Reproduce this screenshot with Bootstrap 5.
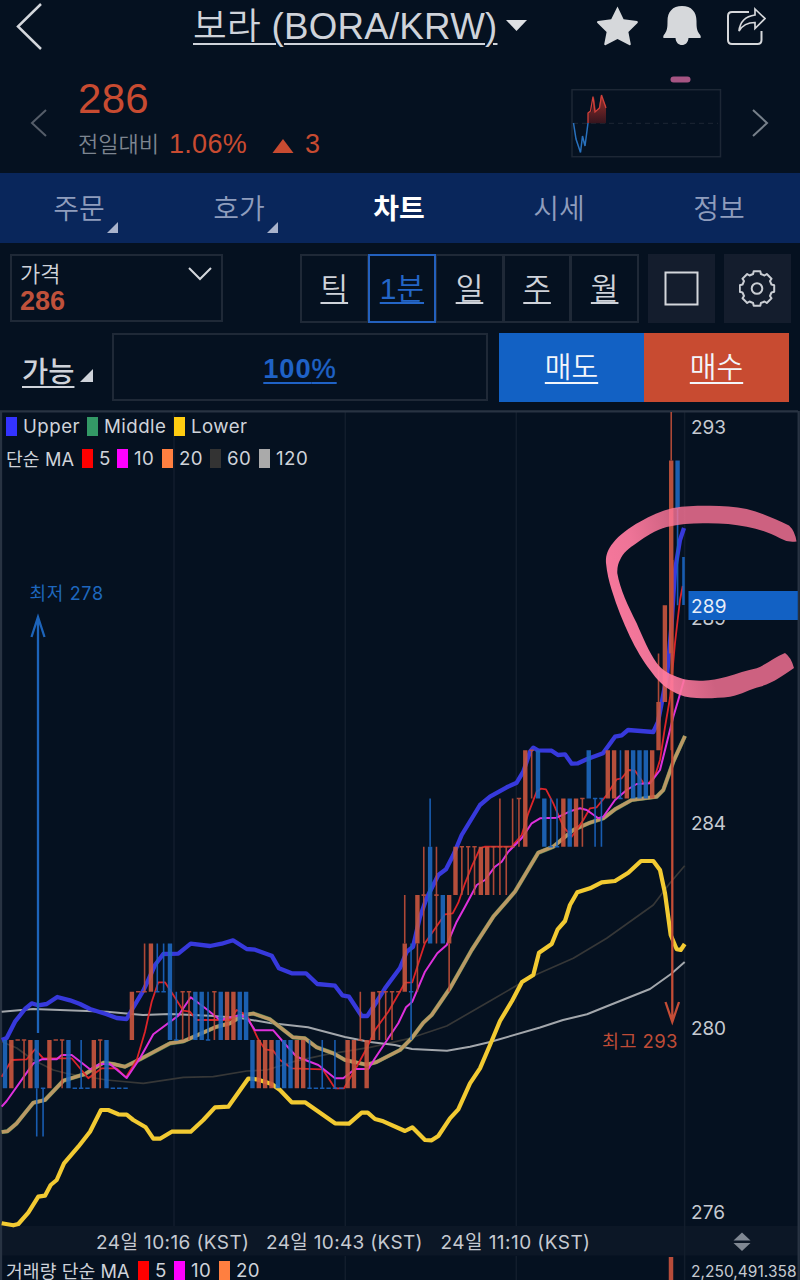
<!DOCTYPE html>
<html lang="ko">
<head>
<meta charset="utf-8">
<meta name="viewport" content="width=device-width, initial-scale=1">
<title>보라 (BORA/KRW)</title>
<link href="https://cdn.jsdelivr.net/npm/bootstrap@5.3.0/dist/css/bootstrap.min.css" rel="stylesheet">
<style>
:root{--ink:#051120;--line:#1f2937;--up:#c84b31;--down:#1261c4;--txt:#cfd3da}
body{width:800px;height:1280px;overflow:hidden;background:var(--ink);color:var(--txt);font-family:"Liberation Sans","Noto Sans CJK KR",sans-serif;line-height:1}
a{color:inherit}
.topbar{height:52px;padding:0 34px 0 16px}
.pair{font-size:36.7px;line-height:48px;letter-spacing:.25px;text-underline-offset:4px;text-decoration-thickness:2px;margin-left:150px;white-space:nowrap;padding-top:2px;font-weight:350}
.quote{height:121px;padding:24px 31px 0 30px}
.last{font-size:42px;line-height:46px;color:var(--up);margin-left:31px;letter-spacing:.3px}
.delta{color:var(--up);font-size:27px;line-height:34px;height:34px;margin:5px 0 0 31px}
.delta .rate{width:103px;letter-spacing:.3px}
.delta .cap{font-size:22px;color:#7d8590;font-weight:350;width:91px;padding-top:2px}
.tabs{height:70px;background:#09265b}
.tabs a{flex:1 1 0;color:#8f9dbd;font-size:28px;font-weight:350;text-decoration:none;line-height:74px;text-align:center;position:relative}
.tabs a.active{color:#fff;font-weight:700}
.tabs span{display:inline-block;position:relative;left:-1px;height:70px}
.more::after{content:"";position:absolute;right:-13px;bottom:10px;border-style:solid;border-width:0 0 11px 11px;border-color:transparent transparent #a9b3cc transparent}
.tools{height:90px;padding:11px 9px 0 10px}
.pricebox{width:213px;height:68px;border:2px solid var(--line);padding:6px 8px}
.pricebox .lbl{font-size:22px;line-height:26px;font-weight:350}
.pricebox .val{font-size:27px;line-height:26px;font-weight:700;color:#bf513b}
.seg{margin-left:78px;height:69px;width:338px}
.seg a{flex:1 1 0;border:2px solid var(--line);margin-left:-1px;text-align:center;font-size:30px;font-weight:350;line-height:66px;text-underline-offset:3px;text-decoration-thickness:2px}
.seg a.active{border-color:#2360bd;color:#2466c8;z-index:1;position:relative}
.tool{width:67px;height:69px;background:#141d2d}
.orders{height:77px;padding:0 11px 0 22px}
.avail{width:90px;font-size:28.5px;font-weight:500;line-height:79px;white-space:nowrap}
.avail a,.orders a{text-underline-offset:4px;text-decoration-thickness:2px}
.percent{width:376px;height:68px;border:2px solid var(--line);text-align:center;font-weight:700;font-size:27.3px;letter-spacing:.9px;line-height:68px;color:#1f62c6}
.percent b{font-weight:400;-webkit-text-stroke:.4px}
.trade{width:145px;height:68.500px;line-height:71px;text-align:center;font-size:29px;color:#f3f6fb;font-weight:350}
.sell{background:var(--down);margin-left:11px}.buy{background:var(--up)}
.plot{height:870px;position:relative;font-family:Inter,"Noto Sans CJK KR",sans-serif;font-size:18.7px;letter-spacing:.45px;padding-top:1px}
.plot svg{position:absolute;left:0;top:0}
.legend{display:grid;position:relative;padding-left:6px;align-items:center;height:32px;line-height:32px;white-space:nowrap}
.bands{grid-template-columns:81px 87px auto}
.averages{grid-template-columns:76px 35px 45px 48px 49px auto}
.vol{grid-template-columns:132px 36px 45px auto;height:30px;line-height:30px}
.legend i{display:inline-block;width:11px;height:19px;margin-right:6px;vertical-align:-3px}
.ko{font-family:Inter,"Noto Sans CJK KR",sans-serif;font-size:18.2px;letter-spacing:.1px}
.chartpad{height:781px}
</style>
<script src="https://cdn.jsdelivr.net/npm/bootstrap@5.3.0/dist/js/bootstrap.bundle.min.js"></script>
</head>
<body>
<header class="topbar d-flex align-items-center">
  <svg width="27" height="48" fill="none" stroke="#d4d7dc" stroke-width="2.500"><path d="M25 2 2 24.500 25 47"/></svg>
  <a href="#" class="pair">보라 (BORA/KRW)</a>
  <svg width="22" height="12" style="margin-left:9px"><path d="M0 0h21L10.500 11z" fill="#dfe1e4"/></svg>
  <div class="d-flex align-items-center ms-auto">
    <svg width="42" height="42" viewBox="596 4 42 42"><path d="m617.500 5.500 6.100 12.700 13.500 1.900q1.400 1 .2 2.200l-8.900 8.700 2.400 12.200q-.3 1.400-1.700.8l-11.600-6-11.600 6q-1.300.6-1.700-.8l2.400-12.200-9.400-9.200q-.8-1.300.8-1.800l13.200-1.800z" fill="#d6d8db"/></svg>
    <svg width="40" height="42" viewBox="663 5 40 42" class="mx-4"><path d="M683 6c-9.500 0-14.500 6-14.500 15 0 7.500-.5 9-2.500 12.500q-2.500 2.500-1.500 4.500h37q1-2-1.500-4.500c-2-3.500-2.500-5-2.500-12.500 0-9-5-15-14.500-15zM676.500 37.500c0 10 13 10 13 0z" fill="#d6d8db"/></svg>
    <svg width="40" height="42" viewBox="726 5 40 42" fill="none" stroke="#d6d8db" stroke-width="2"><path d="M749 12h-17q-4 0-4 4v24q0 4 4 4h25.500q4 0 4-4v-9"/><path d="M755 9l10 9.500-10 10v-6q-11 0-16 8.500 1.500-14 16-16z" stroke-width="1.700"/></svg>
  </div>
</header>

<section class="quote d-flex">
  <svg width="17" height="28" style="margin-top:33px" fill="none" stroke="#555d69" stroke-width="2"><path d="M16 1 2 14l14 13"/></svg>
  <div>
    <div class="last">286</div>
    <div class="delta d-flex align-items-center"><span class="cap">전일대비</span><span class="rate">1.06%</span><svg width="22" height="14" style="margin:4px 11px 0 0"><path d="M11 0 21.500 14h-21z" fill="#c84b31"/></svg><span>3</span></div>
  </div>
  <svg class="ms-auto" width="160" height="90" viewBox="566 74 160 90" style="margin-top:-2px">
    <defs><linearGradient id="g" x2="0" y2="1"><stop stop-color="#9b302c"/><stop offset="1" stop-color="#35151e"/></linearGradient></defs>
    <rect x="670.500" y="76.500" width="20" height="6" rx="3" fill="#a65583"/>
    <rect x="572" y="89.700" width="148.500" height="67" fill="none" stroke="#1d2735" stroke-width="1.500"/>
    <path d="M573 123.300H718" stroke="#1d2735" stroke-dasharray="5 4"/>
    <path d="M588 123.300v-11l4-1 2-14 2 14 3-4 2-12 5 11v17z" fill="url(#g)"/>
    <path d="M573.500 123 576 139l4.500 13.500 2-16.500 2.500 10 3-23" fill="none" stroke="#2871bd" stroke-width="1.500"/>
    <path d="M588 123v-10l2.500-2 2.500-14.500 2 15.500 4.500-4 2-13 4.500 13" fill="none" stroke="#d0403a" stroke-width="1.300"/>
  </svg>
  <svg width="17" height="28" style="margin:33px 0 0 26px" fill="none" stroke="#77808a" stroke-width="2"><path d="M1 1l14 13L1 27"/></svg>
</section>

<nav class="tabs d-flex">
  <a href="#"><span class="more">주문</span></a><a href="#"><span class="more">호가</span></a><a href="#" class="active"><span>차트</span></a><a href="#"><span>시세</span></a><a href="#"><span>정보</span></a>
</nav>

<section class="tools d-flex">
  <div class="pricebox d-flex justify-content-between">
    <div><div class="lbl">가격</div><div class="val">286</div></div>
    <svg width="26" height="16" style="margin:4px 0 0 0" fill="none" stroke="#d4d7dc" stroke-width="2"><path d="M2 2l11 11L24 2"/></svg>
  </div>
  <div class="seg d-flex"><a href="#">틱</a><a href="#" class="active">1분</a><a href="#">일</a><a href="#">주</a><a href="#">월</a></div>
  <div class="tool d-flex align-items-center justify-content-center ms-auto"><svg width="36" height="36"><rect x="1.500" y="1.500" width="32" height="32" fill="none" stroke="#d4d7dc" stroke-width="2"/></svg></div>
  <div class="tool d-flex align-items-center justify-content-center" style="margin-left:9px">
    <svg width="38" height="38" viewBox="-18 -18.500 38 38" fill="none" stroke="#c9cdd3" stroke-width="2" stroke-linejoin="round"><circle r="5.300"/><path id="gear"/></svg>
  </div>
</section>

<section class="orders d-flex">
  <div class="avail"><a href="#">가능</a><svg width="13" height="13" style="margin:3px 0 0 6px"><path d="M0 13 13 0v13z" fill="#cfd3da"/></svg></div>
  <div class="percent"><a href="#">100<b>%</b></a></div>
  <div class="trade sell"><a href="#">매도</a></div>
  <div class="trade buy"><a href="#">매수</a></div>
</section>

<main class="plot">
  <svg width="800" height="870" viewBox="0 410 800 870" fill="none" id="chart">
    <path d="M0 1226h800v29.500H0z" fill="#0c1726"/>
    <path d="M174 412v814M345.300 412v814M516.300 412v814M684.600 412v868M345.300 1256v24M516.300 1256v24" stroke="#121d2c" stroke-width="1.500"/>
    <path d="M0 411.300h798M1 411v869M798.700 411v869" stroke="#283342" stroke-width="2.300"/>
    <g stroke-linejoin="round" stroke-linecap="butt">
      <polyline stroke="#363737" stroke-width="1.700" points="1.7,1041.700 16.700,1048 33.300,1060 53.300,1070 67,1073.500 106.700,1080 143.300,1083.300 183.300,1077.300 213.300,1076.700 246.700,1071 266.700,1070 293.300,1061.700 326.700,1054.300 370,1047.300 410,1038.300 446.700,1026 490,1001 533,976 573.300,958.300 606.700,938.300 653.300,905 670,883 684.700,865.700"/>
      <polyline stroke="#a3a7ac" stroke-width="2" points="1.7,1011.700 33,1009 60,1010 107,1011.700 143,1015 170,1014 210,1015.700 240,1018 270,1023 308,1027.300 345,1037 370,1042 395,1045 412,1049 447,1050.700 470,1046.700 490,1042 540,1027.500 563,1020 587,1014.300 605,1007 630,997 650,989 671,974 684.700,962"/>
      <polyline stroke="#3739dc" stroke-width="4.300" points="1.7,1040 6.700,1038 15,1021.700 25,1009 31.700,1003.300 38,1005.300 46.700,1004 57.300,997 70,1000.300 80,1004 90,1009 106.700,1014.300 116.700,1018 126.700,1019 133.300,1007.300 143.300,990.700 148.300,980 155,965 163.300,954 178.300,953.700 190.700,943.700 210,946 221.700,943.700 233,940.300 246.700,949 255,949.700 271.700,955.700 279,968.300 291.700,973.300 306,973.300 317.300,984 335,985.700 342.300,995.300 349,996.700 361.700,1016 367.300,1016 376.700,1001.700 385,988.300 400,968 406.700,951.700 413,946.700 420,916.700 426.700,898 438.300,875 446,869.300 453.300,855 461.700,835 480,805 490,796.700 506.700,787.300 516.700,782.700 523.300,771.700 530,751.700 533.300,747.700 538,750.300 551.700,750.700 558,755 565,754.300 571.700,763.700 578,763.300 586.700,759.300 603,753.300 615,736.700 621.700,735.300 628,730 653.300,732 658,722 661.700,703 667.300,673 671.700,623 675,570 680,540 684,528"/>
      <polyline stroke="#4c7c4c" stroke-width="4.200" class="mid"/>
      <polyline stroke="#ba9864" stroke-width="3.500" class="mid"/>
      <polyline stroke="#f2ca32" stroke-width="4.200" points="1.7,1223.300 13.300,1225.300 18.300,1224 28.300,1212.700 38.300,1196.700 45,1195.700 50.700,1185 56.700,1180 64,1163.300 78.300,1146.700 90,1131.700 101,1110 108.300,1110 118.300,1114.300 126.700,1114.700 133.300,1120 145.700,1127.300 153.300,1138.700 160,1138.700 171.700,1131.700 190.700,1131.700 203.300,1120 215,1107.300 228.300,1106.700 248.300,1078.500 256.700,1079.300 271.700,1084 280,1090 291.700,1102.300 305,1102.300 335,1123.300 349,1123.700 361.700,1112.700 367.700,1112.700 375,1119 383.300,1121.300 405,1131 412.300,1127.300 425,1140 431.700,1140.300 438.300,1136 450,1118.300 458.300,1109.300 470,1083.300 480,1068.300 490,1045 500,1021 512,1001 522,982 533.300,975 539,952.700 551.700,944 557.700,929.300 565,921 570,905 577.300,892.300 590,888.300 601.700,882.300 615,881 628.300,872.700 641,861 653.300,861 660,870 665,893.300 670.700,935 676.700,949.300 680.700,950 684.700,944"/>
      <polyline stroke="#dc2429" stroke-width="1.800" points="1.7,1076.700 11.700,1060 26.700,1059.300 35,1049.300 43.300,1058.300 71.700,1058.300 88.300,1078.300 101.700,1068.300 116.700,1068.300 126,1077.300 136.700,1060 145,1031.700 151.700,1001.700 158.300,982.300 165,982.300 173.300,995 183.300,1010.700 190,1011.700 196.700,1020 230,1020 236.700,1010 246.700,1015 258.300,1039.300 265,1049.300 273.300,1050.700 280,1060 291.700,1068.300 322.700,1069.300 335,1088.300 344,1088.300 356.700,1066.700 366.700,1048.300 375,1030 388.300,1011.700 405,982.700 412.300,982.300 420,958.300 425,943 445,914.300 452.700,913.300 458.300,902.700 465,883.300 471.700,866.700 480,848.300 485,846.700 511.700,846.700 521.700,835 528.300,813.300 536.700,791.700 540.700,788.700 546,789.300 553.300,803.300 563.300,826.700 571.700,836.700 583.300,820 590,808.300 596.700,807.300 606.700,795 616.700,779.300 621.700,778.300 628.300,770 635,770.700 643.300,782.700 648.300,783.300 655,776 660,760 665,727 670,698 675,643 680,600 682.700,586"/>
      <polyline stroke="#de30dc" stroke-width="2" points="1.7,1106.700 6.700,1101 33.300,1063.300 41.700,1059.300 56.700,1059.300 61.700,1055 71.700,1055 90,1069.300 100,1064 110,1064 126.700,1078 140,1058.300 153.300,1034.300 178.300,1015.700 190.700,997.300 206.700,1009.300 220,1020 240,1015 247,1018 255,1030.300 273.300,1030.300 285,1044 296.700,1056.700 318.300,1065 335,1078.300 343.300,1078.300 355,1069 368.300,1069 375,1058.300 388.300,1038.300 398.300,1023.300 406,1007.300 412.300,1001.700 425,971.700 437.300,953.300 446.700,945 456.700,921.700 465,906.700 476.700,885 485,880 495,866.700 501.700,861.700 508.300,851.700 521.700,838.300 531.700,823.300 540,818.300 556.700,817.700 571.700,810.700 580,808.300 586.700,810 598.300,818.300 603.300,816.700 615,800 626.700,790 636.700,784 650,783.300 660,770 666.700,743.300 673.300,716.700 678.300,700 684,680"/>
    </g>
    <g opacity=".9"><path id="upBody" stroke="#ca563e" stroke-width="4.400"/><path id="upWick" stroke="#c04f39" stroke-width="1.600"/><path id="dnBody" stroke="#1e68bf" stroke-width="4.400"/><path id="dnWick" stroke="#1b65c0" stroke-width="1.600"/></g>
    <path d="M38 1033V617M31.500 637 38 617l6.500 20" stroke="#1d64ba" stroke-width="2.300"/>
    <path d="M672.300 560v462M665.500 1002l6.800 20 6.700-20" stroke="#c44d36" stroke-width="2.300"/>
    <!-- hand-drawn marker stroke -->
    <defs><linearGradient id="marker" gradientUnits="userSpaceOnUse" x1="606" y1="600" x2="690" y2="580"><stop stop-color="#ff7ba0" stop-opacity=".97"/><stop offset=".45" stop-color="#ff7ba0" stop-opacity=".93"/><stop offset="1" stop-color="#ff7598" stop-opacity=".8"/></linearGradient></defs>
    <path d="M796.500 541.500Q795 531 789 525.500C775 519 762 513 746.700 509C734 506.500 720 505.500 706.700 505.700C694 505.700 684 506 673 508C661 511 650 516 640 521.700C630 527 619 535 613 543C607 550 605.500 557 606 563C607 573 609 581 611.700 590C617 607 623 622 630 636.700C636 649 643 661 650 670C657 680 664 687 673.300 691.700C681 696 688 697.700 696.700 698C709 698.500 719 698 730 696.700C742 694.500 750 689 760 686.700C773 683 784 675 794 668Q791 657 785 653C775 657 767 664 756.700 668.300C747 670 737 674 726.700 676.700C718 679 711 680.500 703 680.700C693 680.500 684 680 676.700 676.700C669 674 662 670 656.700 663C649 652 643 638 636.700 623.300C628 606 620 589 617.300 573.300Q617 565 620 560C623 553 629 548 636.700 543C646 536 656 530 666.700 527C679 524 691 523.500 703 523.300C719 523 733 524 746.700 526.700C759 529 770 533 780 538.300Q788 543 796.500 541.500Z" fill="url(#marker)"/>
    <g fill="#c6cad1" font-size="19"><text x="691" y="433.500" textLength="35.500">293</text><text x="691" y="625" textLength="35.500">289</text>
      <path d="M688.500 591h109.300v29H688.500z" fill="#1261c4"/><text x="691" y="613" textLength="36" fill="#e8eef8">289</text>
      <text x="691" y="830" textLength="35.500">284</text><text x="691" y="1035" textLength="35.500">280</text><text x="691" y="1219" textLength="34.500">276</text>
      <text x="96" y="1249" textLength="153.500">24일 10:16 (KST)</text><text x="266" y="1249" textLength="157">24일 10:43 (KST)</text><text x="440.500" y="1249" textLength="150">24일 11:10 (KST)</text>
      <text x="691" y="1277" font-size="15.500" textLength="106">2,250,491.358</text></g>
    <text x="29.500" y="600" font-size="18" fill="#1e67bd" textLength="74">최저 278</text>
    <text x="602" y="1048" font-size="18.500" fill="#bf4c37" textLength="76">최고 293</text>
    <path d="M733.500 1240.500 742 1232.500l8.500 8zM733.500 1243l8.500 8 8.500-8z" fill="#808893"/>
    <path d="M671 1257v23" stroke="#b74c3a" stroke-width="4.500"/>
  </svg>
  <div class="legend bands"><span><i style="background:#3333ff"></i>Upper</span><span><i style="background:#339966"></i>Middle</span><span><i style="background:#ffcc11"></i>Lower</span></div>
  <div class="legend averages"><span class="ko">단순 MA</span><span><i style="background:#ff0000"></i>5</span><span><i style="background:#ff00ff"></i>10</span><span><i style="background:#ff7f40"></i>20</span><span><i style="background:#333"></i>60</span><span><i style="background:#aaa"></i>120</span></div>
  <div class="chartpad"></div>
  <div class="legend vol"><span class="ko">거래량 단순 MA</span><span><i style="background:#ff0000"></i>5</span><span><i style="background:#ff00ff"></i>10</span><span><i style="background:#ff7f40"></i>20</span></div>
</main>

<script>
// Bollinger middle band and the 20-period average share the same values
const mid = "1.7,1132 7.3,1131.3 16.7,1123.3 33.3,1102.7 45,1100 63.3,1080.7 85,1074 103.3,1062.7 113.3,1064 125,1066.7 140,1059.3 170,1043.3 183.3,1041.3 215,1027.3 230,1023.3 243.3,1015 253.3,1013.5 270,1019.3 293,1037.3 305,1038.3 316.7,1047.3 333.3,1053.3 345,1060 366.7,1064.7 376.7,1062 400,1050 411.7,1038.3 423.3,1022.7 431.7,1015 450,988.3 471.7,950 493.3,916.7 515,891.7 538.3,852.7 553.3,846.7 573.3,830 590,822.7 603.3,818.3 615,809.3 631.7,800 656.7,796.7 663.3,790 673.3,761.7 685,736";
document.querySelectorAll('.mid').forEach(p => p.setAttribute('points', mid));

const X = i => 5 + 6.345 * i, Y = v => 1088.3 - 48.3 * (v - 279);
const d = {upBody: '', upWick: '', dnBody: '', dnWick: ''};
const line = (k, i, a, b) => d[k] += `M${X(i)} ${Y(a)}V${Y(b)}`;
const dash = (k, i, v) => d[k] += `M${X(i) - 2.2} ${Y(v)}h4.4`;
// index, direction, open/close range, then the wick range when it reaches further
const bodies = `0d279-280 1u279-280 4u279-280 5d279-280/278-280 7u279-280 10d279-280 14u279-280 16d279-280 20u280-281 23u281-282
26d280-282 30d280-281 31d280-281 34d280-281 35u280-281 36u280-281 37d280-281 38d280-281 39d279-280 40u279-280 41u279-280 42u279-280
43d279-280 44d279-280 45d279-280 46u279-280 47u279-280 54u279-280 55u279-280 57u279-280 58u280-281 63u281-282/281-283
65u282-283/281-283 67d282-284/282-285 69d282-283 70u282-283/281-283 71u283-284 75u283-284 76u283-284 82u284-286 84d285-286
85d284-285 88u284-285 89d284-285 90u284-285 92d285-286 95u285-286 96u285-286 98u285-286 99d285-286 100d285-286 101d285-286
102u285-286 103u286-287/286-288 104u287-289 105u288-292/286-293 106d291-292/289-292`;
// index, direction, wick range, price of the flat open/close
const flats = `2u280-280@280 3u279-280@280 6d278-279@279 8u280-280@280 9u279-280@280 11d279-279@279 12d279-280@279 13d279-279@279
15u279-280@280 17d279-279@279 18d279-279@279 19d279-279@279 21u281-281@281 22u281-282@281 24d281-282@281 25d281-282@281
27d280-281@280 28u280-281@281 29u280-281@281 32d280-281@280 33u280-281@281 48d279-280@279 49d279-279@279 50d279-280@279
51d279-279@279 52d279-280@279 53d279-279@279 56u280-281@280 59u280-281@281 60u280-281@281 61u280-281@281 62u281-281@281
64d280-282@281 66u282-284@283 68u282-284@283 72u283-284@284 73u283-284@284 74u283-284@284 77u283-284@284 78u283-285@284
79u283-284@284 80u284-285@284 81u284-285@285 83u285-286@286 86d284-285@284 87d284-285@284 91u284-285@285 93d284-285@285
94d284-285@285 97d285-286@285`;
for (const m of bodies.matchAll(/(\d+)([ud])(\d+)-(\d+)(?:\/(\d+)-(\d+))?/g)) {
  const k = m[2] == 'u' ? 'up' : 'dn';
  line(k + 'Body', m[1], m[3], m[4]);
  if (m[5]) { if (m[5] < m[3]) line(k + 'Wick', m[1], m[5], m[3]); if (m[6] > m[4]) line(k + 'Wick', m[1], m[4], m[6]); }
}
for (const m of flats.matchAll(/(\d+)([ud])(\d+)-(\d+)@(\d+)/g)) {
  const k = (m[2] == 'u' ? 'up' : 'dn') + 'Wick';
  if (m[3] != m[4]) line(k, m[1], m[3], m[4]);
  dash(k, m[1], m[5]);
}
d.dnWick += 'M683 557V605M684 557V605';
for (const k in d) document.getElementById(k).setAttribute('d', d[k]);

// eight-tooth gear outline
let g = '';
for (let t = 0; t < 8; t++) for (const [o, r] of [[-11, 17.500], [11, 17.500], [15, 15], [30, 15]]) {
  const a = (t * 45 + o) * Math.PI / 180;
  g += (g ? 'L' : 'M') + (r * Math.sin(a)).toFixed(1) + ' ' + (-r * Math.cos(a)).toFixed(1);
}
document.getElementById('gear').setAttribute('d', g + 'Z');
</script>
</body>
</html>
